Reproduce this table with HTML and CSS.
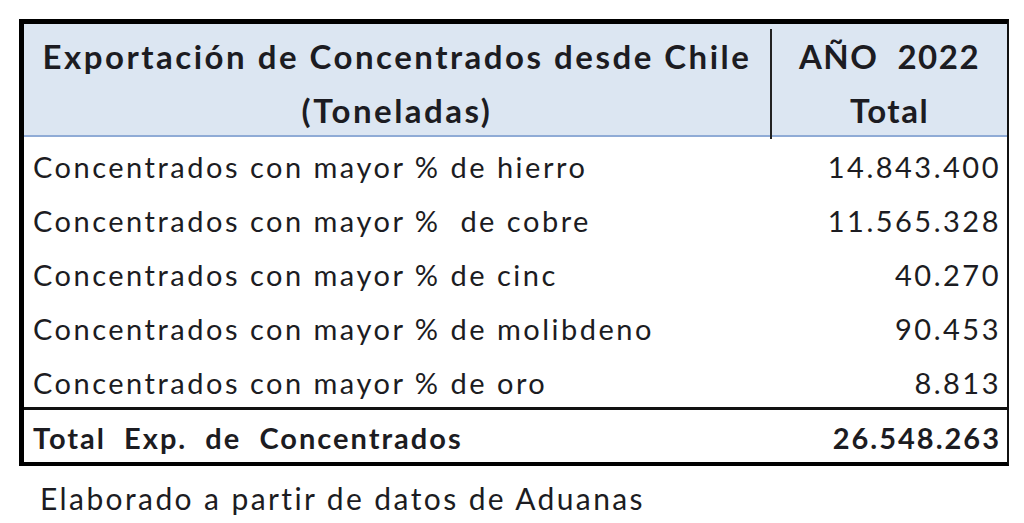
FILE: index.html
```html
<!DOCTYPE html>
<html lang="es">
<head>
<meta charset="utf-8">
<title>Exportación de Concentrados desde Chile</title>
<link rel="stylesheet" href="styles.css">
</head>
<body>
<div class="sheet">
  <div class="head">
    <div class="head-title">Exportación de Concentrados desde Chile<br>(Toneladas)</div>
    <div class="head-year">AÑO&nbsp; 2022<br>Total</div>
  </div>
  <div class="row"><span class="label">Concentrados con mayor % de hierro</span><span class="num">14.843.400</span></div>
  <div class="row"><span class="label">Concentrados con mayor %&nbsp; de cobre</span><span class="num">11.565.328</span></div>
  <div class="row"><span class="label">Concentrados con mayor % de cinc</span><span class="num">40.270</span></div>
  <div class="row"><span class="label">Concentrados con mayor % de molibdeno</span><span class="num">90.453</span></div>
  <div class="row"><span class="label">Concentrados con mayor % de oro</span><span class="num">8.813</span></div>
  <div class="row total"><span class="label">Total&nbsp; Exp.&nbsp; de&nbsp; Concentrados</span><span class="num">26.548.263</span></div>
</div>
<p class="source">Elaborado a partir de datos de Aduanas</p>
</body>
</html>
```

FILE: styles.css
```css
* { box-sizing: border-box; }
html, body { margin: 0; padding: 0; background: #fff; }
body {
  font-family: "Lato", "Open Sans", sans-serif;
  color: #1c1c22;
}
.sheet {
  width: 990px;
  margin: 19px 0 0 19px;
  border-top: 5px solid #000;
  border-left: 5px solid #000;
  border-right: 2px solid #111;
  border-bottom: 4px solid #000;
}
.head {
  display: grid;
  grid-template-columns: 746px 1fr;
  background: #dce6f2;
  border-bottom: 2px solid #8fabd6;
  height: 113px;
  font-weight: 700;
  font-size: 33px;
  line-height: 54px;
  text-align: center;
}
.head-title {
  padding-top: 5px;
  letter-spacing: 2.5px;
}
.head-year {
  border-left: 2px solid #222;
  margin-top: 5px;
  margin-bottom: -2px;
  letter-spacing: 1.5px;
}
.row {
  display: flex;
  justify-content: space-between;
  align-items: center;
  height: 54px;
  padding: 5px 6px 0 9px;
  font-size: 29px;
  letter-spacing: 2.5px;
}
.total {
  height: 55px;
  padding-top: 2px;
  border-top: 3px solid #111;
  font-weight: 700;
  letter-spacing: 2px;
}
.source {
  margin: 12px 0 0 40px;
  font-size: 30px;
  line-height: 40px;
  letter-spacing: 2.4px;
}
```
